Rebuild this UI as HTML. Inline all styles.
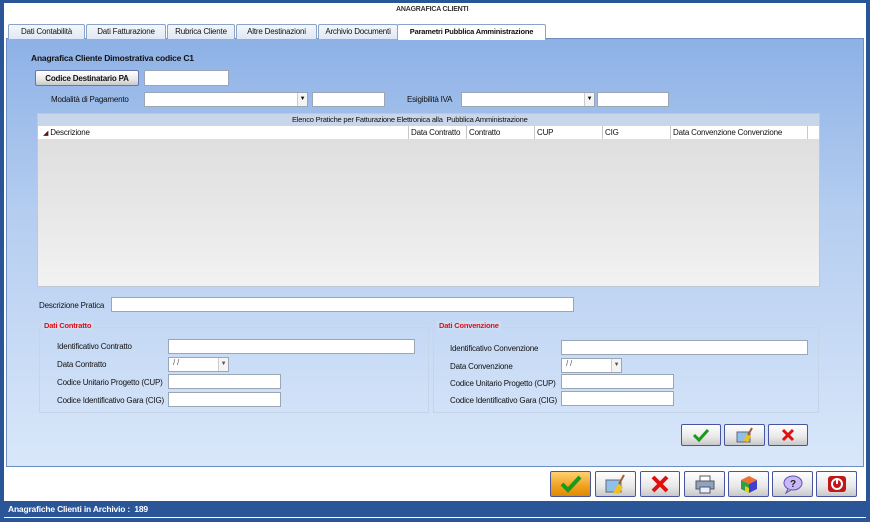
<!DOCTYPE html>
<html><head><meta charset="utf-8"><style>
*{box-sizing:border-box;margin:0;padding:0}
body{width:870px;height:522px;overflow:hidden;font-family:"Liberation Sans",sans-serif;font-size:8px;letter-spacing:-0.2px;color:#111;background:#fff;white-space:nowrap}
.a{position:absolute}
#frame{position:absolute;left:0;top:0;width:870px;height:522px;border:4px solid #2a5597;border-top-width:3px;background:#fff}
.tab{position:absolute;top:24px;height:15px;border:1px solid #8aa3c6;border-bottom:none;background:linear-gradient(#f4f7fc,#dfe8f5);font-size:8px;text-align:center;line-height:14px;border-radius:2px 2px 0 0}
.inp{position:absolute;background:#fff;border:1px solid #9aa6b6;height:15px}
.lbl{position:absolute;font-size:8px}
.dd{position:absolute;width:10px;height:13px;border-left:1px solid #ccc;right:0;top:0;font-size:6px;text-align:center;line-height:13px;background:#f4f4f4}
.btn{position:absolute;border:1px solid #4a55a0;border-radius:2px;background:linear-gradient(#fff,#e8e8e8 60%,#c8c8c8);display:flex;align-items:center;justify-content:center}
.col{position:absolute;top:126px;height:13px;border-right:1px solid #c8c8c8;line-height:13px;padding-left:2px;font-size:8px;overflow:hidden}
</style></head><body>
<div id="frame"></div>
<div class="a" style="left:396px;top:6px;font-size:7px;color:#333;font-weight:bold">ANAGRAFICA CLIENTI</div>
<div class="a" style="left:6px;top:38px;width:858px;height:429px;border:1px solid #6d8fc4;background:linear-gradient(#8db1e6,#b4cdf0 40%,#d9e7fa)"></div>
<div class="tab" style="left:8px;width:77px">Dati Contabilità</div>
<div class="tab" style="left:86px;width:80px">Dati Fatturazione</div>
<div class="tab" style="left:167px;width:68px">Rubrica Cliente</div>
<div class="tab" style="left:236px;width:81px">Altre Destinazioni</div>
<div class="tab" style="left:318px;width:80px;overflow:hidden">Archivio Documenti</div>
<div class="tab" style="left:397px;width:149px;background:#fff;font-weight:bold;height:16px;font-size:7.5px">Parametri Pubblica Amministrazione</div>
<div class="a" style="left:31px;top:53px;font-weight:bold;font-size:8.5px">Anagrafica Cliente Dimostrativa codice C1</div>
<div class="btn" style="left:35px;top:70px;width:104px;height:16px;border-color:#6a74b0;font-weight:bold;font-size:8px">Codice Destinatario PA</div>
<div class="inp" style="left:144px;top:70px;width:85px;height:16px"></div>
<div class="lbl" style="left:51px;top:95px">Modalità di Pagamento</div>
<div class="inp" style="left:144px;top:92px;width:164px"><div class="dd">▼</div></div>
<div class="inp" style="left:312px;top:92px;width:73px"></div>
<div class="lbl" style="left:407px;top:95px">Esigibilità IVA</div>
<div class="inp" style="left:461px;top:92px;width:134px"><div class="dd">▼</div></div>
<div class="inp" style="left:597px;top:92px;width:72px"></div>
<div class="a" style="left:37px;top:113px;width:783px;height:174px;background:linear-gradient(#dcdcdc,#e6e6e6 50%,#f2f2f2);border:1px solid #c0c8d4"></div>
<div class="a" style="left:38px;top:114px;width:781px;height:12px;background:#c9d6e9;font-size:7.5px;line-height:12px;padding-left:254px">Elenco Pratiche per Fatturazione Elettronica alla &nbsp;Pubblica Amministrazione</div>
<div class="a" style="left:38px;top:126px;width:781px;height:13px;background:#fff"></div>
<div class="col" style="left:38px;width:371px;padding-left:5px"><span style="color:#601010;font-size:7px">◢</span> Descrizione</div>
<div class="col" style="left:409px;width:58px">Data Contratto</div>
<div class="col" style="left:467px;width:68px">Contratto</div>
<div class="col" style="left:535px;width:68px">CUP</div>
<div class="col" style="left:603px;width:68px">CIG</div>
<div class="col" style="left:671px;width:137px">Data Convenzione Convenzione</div>
<div class="lbl" style="left:39px;top:301px">Descrizione Pratica</div>
<div class="inp" style="left:111px;top:297px;width:463px"></div>
<div class="a" style="left:39px;top:327px;width:390px;height:86px;border:1px solid #c6d4e8"></div>
<div class="a" style="left:433px;top:327px;width:386px;height:86px;border:1px solid #c6d4e8"></div>
<div class="a" style="left:42px;top:321px;color:#e01010;font-weight:bold;font-size:7.5px;background:#cbdcf5;padding:0 2px">Dati Contratto</div>
<div class="a" style="left:437px;top:321px;color:#e01010;font-weight:bold;font-size:7.5px;background:#cbdcf5;padding:0 2px">Dati Convenzione</div>
<div class="lbl" style="left:57px;top:342px">Identificativo Contratto</div>
<div class="inp" style="left:168px;top:339px;width:247px"></div>
<div class="lbl" style="left:57px;top:360px">Data Contratto</div>
<div class="inp" style="left:168px;top:357px;width:61px;font-size:8px;padding-left:4px;color:#555">/ /<div class="dd">▼</div></div>
<div class="lbl" style="left:57px;top:378px">Codice Unitario Progetto (CUP)</div>
<div class="inp" style="left:168px;top:374px;width:113px"></div>
<div class="lbl" style="left:57px;top:396px">Codice Identificativo Gara (CIG)</div>
<div class="inp" style="left:168px;top:392px;width:113px"></div>
<div class="lbl" style="left:450px;top:344px">Identificativo Convenzione</div>
<div class="inp" style="left:561px;top:340px;width:247px"></div>
<div class="lbl" style="left:450px;top:362px">Data Convenzione</div>
<div class="inp" style="left:561px;top:358px;width:61px;font-size:8px;padding-left:4px;color:#555">/ /<div class="dd">▼</div></div>
<div class="lbl" style="left:450px;top:379px">Codice Unitario Progetto (CUP)</div>
<div class="inp" style="left:561px;top:374px;width:113px"></div>
<div class="lbl" style="left:450px;top:396px">Codice Identificativo Gara (CIG)</div>
<div class="inp" style="left:561px;top:391px;width:113px"></div>
<div class="btn" style="left:681px;top:424px;width:40px;height:22px"><svg width="18" height="14"><path d="M2 7l5 5 9-10" stroke="#1a9a1a" stroke-width="3" fill="none"/></svg></div>
<div class="btn" style="left:724px;top:424px;width:41px;height:22px"><svg width="20" height="16"><rect x="2" y="5" width="13" height="10" fill="#8fc0ea" stroke="#667"/><path d="M8 14l4-7 4 2-3 6z" fill="#f0c020"/><path d="M13 8l4-7" stroke="#a0622a" stroke-width="2"/></svg></div>
<div class="btn" style="left:768px;top:424px;width:40px;height:22px"><svg width="16" height="16"><path d="M3 3l10 10M13 3L3 13" stroke="#e01010" stroke-width="3"/></svg></div>
<div class="a" style="left:6px;top:466px;width:858px;height:1px;background:#6d8fc4"></div>
<div class="btn" style="left:550px;top:471px;width:41px;height:26px;background:linear-gradient(#ffd070,#f0a020 60%,#e08a00)"><svg width="24" height="20"><path d="M3 10l6 6 12-13" stroke="#1a9a1a" stroke-width="4" fill="none"/></svg></div>
<div class="btn" style="left:595px;top:471px;width:41px;height:26px"><svg width="24" height="22"><rect x="2" y="7" width="15" height="12" fill="#8fc0ea" stroke="#667"/><path d="M9 20l5-9 5 3-4 7z" fill="#f0c020"/><path d="M15 11l5-9" stroke="#a0622a" stroke-width="2"/></svg></div>
<div class="btn" style="left:640px;top:471px;width:40px;height:26px"><svg width="20" height="20"><path d="M3 3l14 14M17 3L3 17" stroke="#e01010" stroke-width="4"/></svg></div>
<div class="btn" style="left:684px;top:471px;width:41px;height:26px"><svg width="22" height="20"><rect x="6" y="2" width="10" height="6" fill="#fff" stroke="#556"/><rect x="2" y="7" width="18" height="8" fill="#8fa3bf" stroke="#556"/><rect x="6" y="13" width="10" height="6" fill="#e8f0ff" stroke="#556"/></svg></div>
<div class="btn" style="left:728px;top:471px;width:41px;height:26px"><svg width="20" height="20"><path d="M10 2l8 4-8 4-8-4z" fill="#f07030"/><path d="M2 6l8 4v9l-8-4z" fill="#30a040"/><path d="M18 6l-8 4v9l8-4z" fill="#4040d0"/><path d="M6 12l4 2v5l-4-2z" fill="#e0d020"/></svg></div>
<div class="btn" style="left:772px;top:471px;width:41px;height:26px"><svg width="22" height="20"><ellipse cx="11" cy="9" rx="9" ry="7" fill="#c8b8f8" stroke="#6050b0"/><path d="M6 15l-2 4 5-3" fill="#c8b8f8" stroke="#6050b0"/><text x="8" y="13" font-size="10" font-weight="bold" font-family="Liberation Sans" fill="#222">?</text></svg></div>
<div class="btn" style="left:816px;top:471px;width:41px;height:26px"><svg width="20" height="18"><rect x="1" y="1" width="18" height="16" rx="3" fill="#c01818"/><circle cx="10" cy="9" r="5" fill="none" stroke="#fff" stroke-width="2"/><path d="M10 3v6" stroke="#fff" stroke-width="2"/></svg></div>
<div class="a" style="left:4px;top:501px;width:862px;height:16px;background:#2a5597;color:#fff;font-weight:bold;font-size:8.5px;line-height:16px;padding-left:4px">Anagrafiche Clienti in Archivio : &nbsp;189</div>
</body></html>
